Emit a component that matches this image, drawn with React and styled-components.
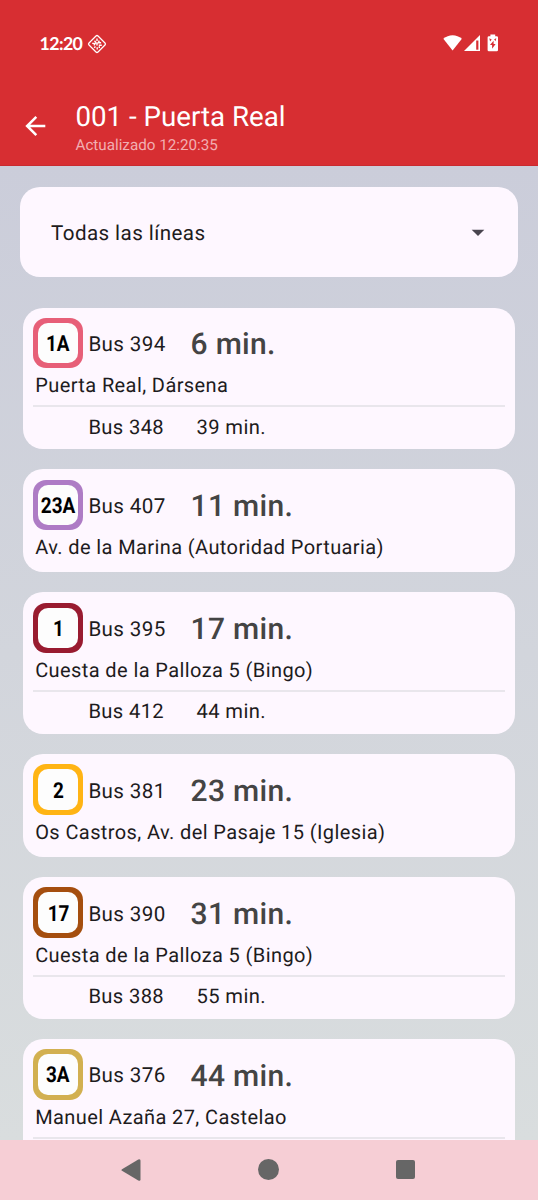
import styled, { createGlobalStyle } from "styled-components";

const arrivals = [
  {
    line: "1A",
    color: "#e75f78",
    bus: "394",
    time: "6 min.",
    stop: "Puerta Real, Dársena",
    next: { bus: "348", time: "39 min." },
  },
  {
    line: "23A",
    color: "#ae7cc5",
    bus: "407",
    time: "11 min.",
    stop: "Av. de la Marina (Autoridad Portuaria)",
  },
  {
    line: "1",
    color: "#991b30",
    bus: "395",
    time: "17 min.",
    stop: "Cuesta de la Palloza 5 (Bingo)",
    next: { bus: "412", time: "44 min." },
  },
  {
    line: "2",
    color: "#ffb414",
    bus: "381",
    time: "23 min.",
    stop: "Os Castros, Av. del Pasaje 15 (Iglesia)",
  },
  {
    line: "17",
    color: "#a54e0f",
    bus: "390",
    time: "31 min.",
    stop: "Cuesta de la Palloza 5 (Bingo)",
    next: { bus: "388", time: "55 min." },
  },
  {
    line: "3A",
    color: "#d2b050",
    bus: "376",
    time: "44 min.",
    stop: "Manuel Azaña 27, Castelao",
    next: {},
  },
];

const StatusIcons = () => (
  <svg width="58" height="20" viewBox="0 0 58 20" fill="#fff">
    <path d="M0.3 4.8C5.6 -0.1 13.6 -0.1 18.9 4.8L9.6 16.4z" />
    <path d="M37 0.9V16.9H21z" />
    <path d="M33.2 6.5h2.2v9.2h-2.2z" fill="#d72e32" />
    <path d="M47.4 2.2v-1.6h4.8v1.6h1.5q1.3 0 1.3 1.3v12.4q0 1.3-1.3 1.3h-7.8q-1.3 0-1.3-1.3V3.5q0-1.3 1.3-1.3z" />
    <path d="M50.6 6.8l-3.6 4.3h2.1v3.6l3.5-4.7h-2zM46.3 4.3l2.4 1.2-1.6 2zM53.3 4.3l-2.2 1 1.4 2z" fill="#d72e32" />
  </svg>
);

const DiamondIcon = () => (
  <svg width="20" height="20" viewBox="0 0 20 20" fill="none" stroke="#fff">
    <path d="M9 2q1-1 2 0l7 7q1 1 0 2l-7 7q-1 1-2 0l-7-7q-1-1 0-2z" strokeWidth="1.3" />
    <path
      d="M10 4.6v2.5M7.5 6.8l1.6 1.8M12.3 6.6l-1 2.2h2.8M5.2 9.4h3l-1.3 2M10 8.6v3M11.8 11.3h3M8.5 12.5l-1.3 1.2M10.2 13.2v2.4M12.3 12.3v1.7"
      strokeWidth="1.4"
    />
  </svg>
);

const BackArrow = () => (
  <svg width="22" height="22" viewBox="0 0 22 22" fill="none" stroke="#fff" strokeWidth="2.5">
    <path d="M20.3 11H2.6M11.3 1.8L2.1 11l9.2 9.2" />
  </svg>
);

const App = () => {
  return (
    <Screen>
      <GlobalStyle />
      <Header>
        <StatusBar>
          <Clock>12:20</Clock>
          <DiamondIcon />
          <Spacer />
          <StatusIcons />
        </StatusBar>
        <Toolbar>
          <BackButton aria-label="Atrás">
            <BackArrow />
          </BackButton>
          <div>
            <Title>001 - Puerta Real</Title>
            <Subtitle>Actualizado 12:20:35</Subtitle>
          </div>
        </Toolbar>
      </Header>
      <Content>
        <LineSelect>
          <span>Todas las líneas</span>
          <svg width="14" height="8" viewBox="0 0 14 8" fill="#49454f">
            <path d="M0.7 0.8h12.6L7 7.1z" />
          </svg>
        </LineSelect>
        <List>
          {arrivals.map(({ line, color, bus, time, stop, next }) => (
            <Card key={line}>
              <CardTop>
                <LineBadge $color={color}>
                  <LineName>
                    <span>{line}</span>
                  </LineName>
                </LineBadge>
                <Bus>Bus {bus}</Bus>
                <MainTime>{time}</MainTime>
              </CardTop>
              <Stop>{stop}</Stop>
              {next && (
                <NextRow>
                  {next.bus && <Bus>Bus {next.bus}</Bus>}
                  <NextTime>{next.time}</NextTime>
                </NextRow>
              )}
            </Card>
          ))}
        </List>
      </Content>
      <NavBar>
        <svg width="20" height="22" viewBox="0 0 20 22" fill="#666">
          <path d="M1 10.2L17.3 0.5q2.2-1 2.2 1.3v18.4q0 2.3-2.2 1.3L1 11.8q-1.2-.8 0-1.6z" />
        </svg>
        <HomeDot />
        <RecentSquare />
      </NavBar>
    </Screen>
  );
};

const GlobalStyle = createGlobalStyle`
  * {
    box-sizing: border-box;
  }
  body {
    margin: 0;
    font-family: Roboto, "Liberation Sans", sans-serif;
    text-rendering: geometricPrecision;
  }
`;

const Screen = styled.main`
  display: flex;
  flex-direction: column;
  height: 1200px;
  overflow: hidden;
  color: #1d1b20;
  font-size: 20.6px;
  letter-spacing: 0.38px;
  background: linear-gradient(#cbcdda 166px, #d9ddde 1140px);
`;

const Header = styled.header`
  flex: none;
  height: 166px;
  color: #fff;
  background: #d72e32;
  border-bottom: 1px solid #c92a2f;
`;

const StatusBar = styled.div`
  display: flex;
  align-items: center;
  height: 86px;
  padding: 1px 37.2px 0 39.5px;
`;

const Clock = styled.span`
  width: 47px;
  padding-bottom: 1px;
  font-family: Lato, sans-serif;
  font-size: 17.8px;
  font-weight: 700;
  letter-spacing: -0.6px;
`;

const Spacer = styled.div`
  flex: 1;
`;

const Toolbar = styled.div`
  display: flex;
  align-items: center;
  height: 79px;
  padding-left: 25px;
`;

const BackButton = styled.button`
  display: flex;
  width: 50.5px;
  padding: 0;
  border: 0;
  background: none;
`;

const Title = styled.h1`
  margin: 6px 0 0;
  font-size: 27.7px;
  font-weight: 400;
  line-height: 34px;
  letter-spacing: 0;
`;

const Subtitle = styled.p`
  margin: 0;
  color: #f2aeb2;
  font-size: 15.2px;
  line-height: 23px;
  letter-spacing: 0;
`;

const Content = styled.section`
  flex: 1;
  min-height: 0;
  overflow: hidden;
  padding: 20.5px 20.5px 0 20px;
`;

const LineSelect = styled.div`
  display: flex;
  align-items: center;
  justify-content: space-between;
  height: 90.5px;
  padding: 2px 33px 0 31px;
  border-radius: 20px;
  background: #fef7ff;
  span {
    padding-top: 2px;
    letter-spacing: 0.42px;
  }
`;

const List = styled.div`
  display: flex;
  flex-direction: column;
  gap: 20.3px;
  padding: 30.5px 2.5px 0 3px;
`;

const Card = styled.article`
  flex: none;
  padding: 10.3px 10px 8px;
  border-radius: 20px;
  background: #fef7ff;
`;

const CardTop = styled.div`
  display: flex;
  align-items: center;
  height: 50.4px;
`;

const LineBadge = styled.div`
  width: 50.4px;
  height: 50.4px;
  margin-right: 5px;
  padding: 5px;
  border-radius: 13px;
  background: ${(props) => props.$color};
`;

const LineName = styled.div`
  display: flex;
  align-items: center;
  justify-content: center;
  height: 100%;
  padding-top: 3px;
  border-radius: 10px;
  background: #fdfdfd;
  color: #000;
  font-weight: 700;
  font-size: 22px;
  letter-spacing: 0;
  span {
    transform: scaleX(0.86);
  }
`;

const Bus = styled.span`
  width: 102.2px;
  padding-top: 4px;
`;

const MainTime = styled.strong`
  padding-top: 4px;
  color: #444;
  font-size: 30px;
  font-weight: 500;
  letter-spacing: 0.3px;
`;

const Stop = styled.p`
  margin: 0;
  padding: 0 0 0 2.2px;
  height: 34px;
  font-size: 20px;
  line-height: 34px;
  letter-spacing: 0.4px;
  white-space: nowrap;
`;

const NextRow = styled.div`
  display: flex;
  align-items: center;
  height: 39px;
  margin-top: 3px;
  margin-bottom: -3.2px;
  padding-left: 55.4px;
  border-top: 2px solid #e9e6ec;
  font-size: 20.2px;
  letter-spacing: 0.35px;
  ${Bus} {
    padding-top: 2px;
  }
`;

const NextTime = styled.span`
  padding: 2px 0 0 6px;
`;

const NavBar = styled.nav`
  flex: none;
  display: flex;
  align-items: center;
  justify-content: center;
  gap: 117px;
  height: 60.5px;
  padding-right: 1.5px;
  background: #f6ced5;
`;

const HomeDot = styled.div`
  width: 21px;
  height: 21px;
  border-radius: 50%;
  background: #666;
`;

const RecentSquare = styled.div`
  width: 19px;
  height: 19px;
  border-radius: 2px;
  background: #666;
`;

export default App;
